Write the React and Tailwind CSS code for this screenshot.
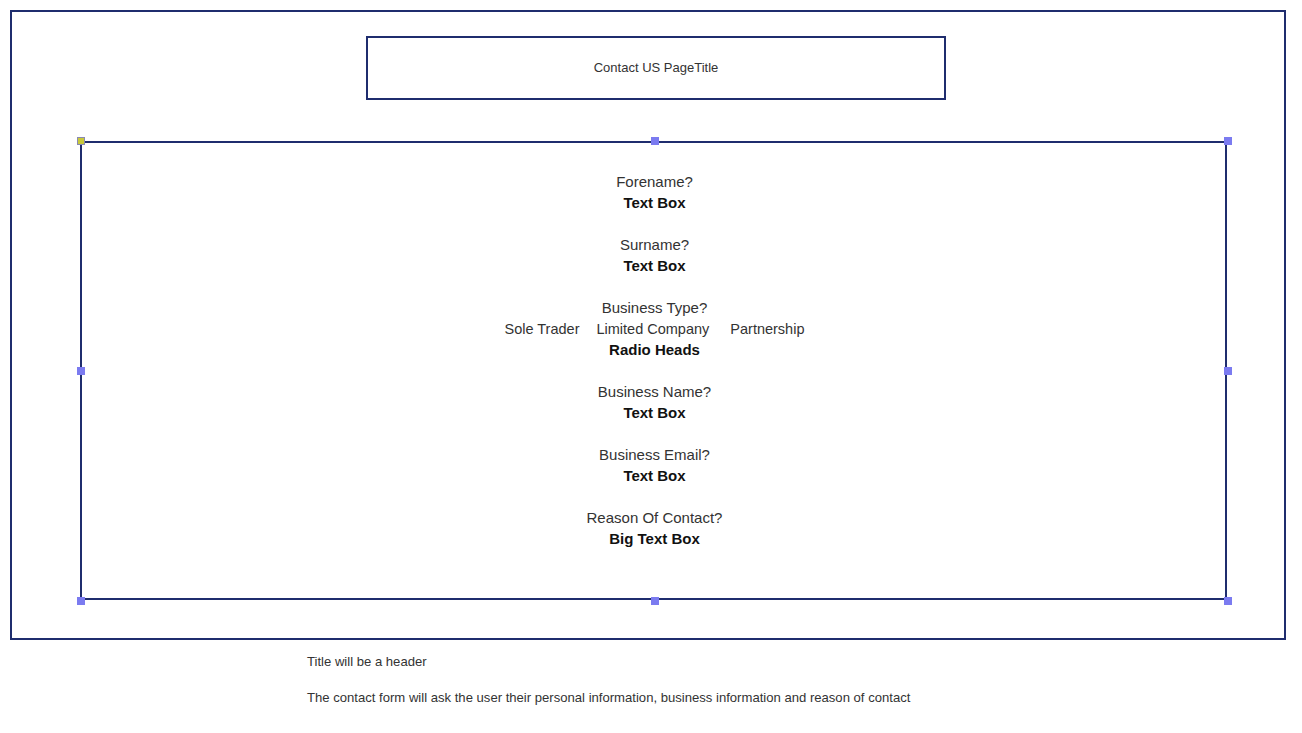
const Handle = ({ className }) => (
  <div className={`absolute w-2 h-2 bg-[#7b7bf0] ${className}`} />
);

const Field = ({ label, value }) => (
  <div className="flex flex-col items-center">
    <span>{label}</span>
    <span className="font-bold text-[#111]">{value}</span>
  </div>
);

export default function App() {
  return (
    <div className="w-[1302px] h-[733px] bg-white font-['Liberation_Sans',Arial,sans-serif] text-[#333]">
      <div className="pt-[10px] pl-[10px]">
        {/* Wireframe frame */}
        <div className="w-[1276px] h-[630px] border-2 border-[#1f2d6e] flex flex-col">
          <div className="ml-[354px] mt-[24px] w-[580px] h-[64px] border-2 border-[#1f2d6e] flex items-center justify-center text-[13px]">
            Contact US PageTitle
          </div>

          <div className="relative ml-[68px] mt-[41px] w-[1147px] h-[459px] border-2 border-[#1f2d6e]">
            <Handle className="-left-[5px] -top-[6px] bg-[#c9c93a] border border-[#8a8ab0]" />
            <Handle className="left-[569px] -top-[6px]" />
            <Handle className="-right-[7px] -top-[6px]" />
            <Handle className="-left-[5px] top-[224px]" />
            <Handle className="-right-[7px] top-[224px]" />
            <Handle className="-left-[5px] -bottom-[7px]" />
            <Handle className="left-[569px] -bottom-[7px]" />
            <Handle className="-right-[7px] -bottom-[7px]" />

            <div className="pt-[28px] pl-[2px] flex flex-col items-center gap-[21px] text-[15px] leading-[21px]">
              <Field label="Forename?" value="Text Box" />
              <Field label="Surname?" value="Text Box" />
              <div className="flex flex-col items-center">
                <span>Business Type?</span>
                <div className="flex h-[21px] pt-[1px] leading-[20px] text-[14.5px]">
                  <span>Sole Trader</span>
                  <span className="ml-[17px]">Limited Company</span>
                  <span className="ml-[21px]">Partnership</span>
                </div>
                <span className="font-bold text-[#111]">Radio Heads</span>
              </div>
              <Field label="Business Name?" value="Text Box" />
              <Field label="Business Email?" value="Text Box" />
              <Field label="Reason Of Contact?" value="Big Text Box" />
            </div>
          </div>
        </div>
      </div>

      {/* Notes */}
      <div className="pl-[307px] pt-[14px] text-[13.1px] leading-[16px] text-[#333] flex flex-col gap-[20px]">
        <p>Title will be a header</p>
        <p>The contact form will ask the user their personal information, business information and reason of contact</p>
      </div>
    </div>
  );
}
